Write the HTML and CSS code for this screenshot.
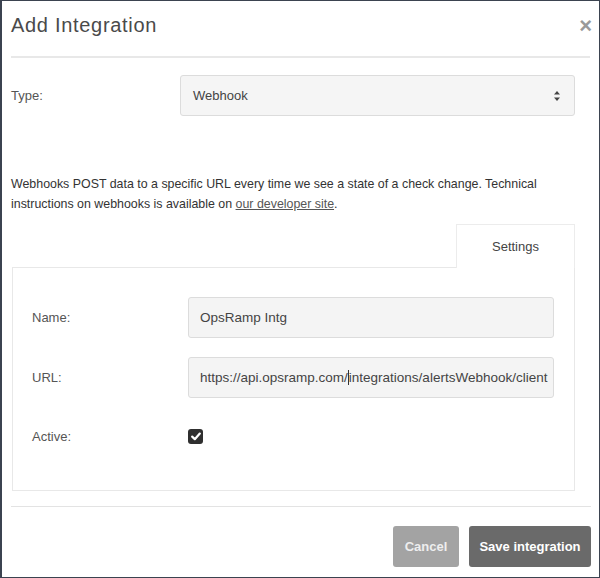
FILE: index.html
```html
<!DOCTYPE html>
<html>
<head>
<meta charset="utf-8">
<link rel="stylesheet" href="styles.css">
</head>
<body>
<div class="modal">
  <div class="modal-header">
    <h1 class="modal-title">Add Integration</h1>
    <span class="close">&times;</span>
  </div>
  <div class="modal-body">
    <div class="type-row">
      <label class="type-label">Type:</label>
      <div class="select">
        <span>Webhook</span>
        <svg class="arrows" width="8" height="12" viewBox="0 0 8 12"><path d="M4 1 L7 4.5 L1 4.5 Z" fill="#444"/><path d="M4 11 L7 7.5 L1 7.5 Z" fill="#444"/></svg>
      </div>
    </div>
    <p class="desc">Webhooks POST data to a specific URL every time we see a state of a check change. Technical instructions on webhooks is available on <a href="#">our developer site</a>.</p>
    <div class="tabs">
      <div class="tab">Settings</div>
    </div>
    <div class="panel">
      <div class="field">
        <label>Name:</label>
        <div class="input">OpsRamp Intg</div>
      </div>
      <div class="field">
        <label>URL:</label>
        <div class="input"><span>https://api.opsramp.com/<span class="caret"></span>integrations/alertsWebhook/client</span></div>
      </div>
      <div class="field check-field">
        <label>Active:</label>
        <span class="checkbox"><svg width="10" height="9" viewBox="0 0 10 9"><path d="M1.2 4.6 L3.8 7.2 L8.8 1.6" stroke="#fff" stroke-width="2.2" fill="none" stroke-linecap="round" stroke-linejoin="round"/></svg></span>
      </div>
    </div>
  </div>
  <div class="modal-footer">
    <button class="btn btn-cancel">Cancel</button>
    <button class="btn btn-save">Save integration</button>
  </div>
</div>
</body>
</html>
```
FILE: styles.css
```css
html, body {
  margin: 0;
  padding: 0;
  background: #fff;
}
body {
  font-family: "Liberation Sans", Arial, sans-serif;
  color: #333;
}
.modal {
  width: 600px;
  height: 578px;
  box-sizing: border-box;
  border: 1px solid #3b4350;
  border-left-width: 2px;
  background: #fff;
  display: flex;
  flex-direction: column;
}
.modal-header {
  margin: 0 9px 0 9px;
  height: 57px;
  border-bottom: 2px solid #e8e8e8;
  display: flex;
  align-items: flex-start;
  justify-content: space-between;
  box-sizing: border-box;
}
.modal-title {
  margin: 12px 0 0 0;
  font-size: 20px;
  font-weight: normal;
  letter-spacing: 0.7px;
  color: #4a4a4a;
  line-height: 24px;
}
.close {
  margin-top: 11px;
  margin-right: -2px;
  font-size: 22px;
  font-weight: bold;
  color: #9a9a9a;
  line-height: 28px;
}
.modal-body {
  padding: 0 24px 0 9px;
}
.type-row {
  display: flex;
  align-items: center;
  margin-top: 17px;
}
.type-label {
  width: 169px;
  font-size: 13px;
  color: #555;
}
.select {
  flex: 1;
  height: 41px;
  box-sizing: border-box;
  background: #f5f5f5;
  border: 1px solid #dcdcdc;
  border-radius: 3px;
  display: flex;
  align-items: center;
  justify-content: space-between;
  padding: 0 13px 0 12px;
  font-size: 13px;
  color: #444;
}
.arrows {
  display: block;
}
.desc {
  margin: 58px 0 0 0;
  font-size: 12.4px;
  line-height: 20px;
  color: #333;
  width: 560px;
}
.desc a {
  color: #555;
  text-decoration: underline;
}
.tabs {
  display: flex;
  justify-content: flex-end;
  margin-top: 10px;
}
.tab {
  width: 119px;
  height: 44px;
  box-sizing: border-box;
  border: 1px solid #ececec;
  border-bottom: none;
  display: flex;
  align-items: center;
  justify-content: center;
  font-size: 13px;
  color: #444;
  margin-bottom: -1px;
  background: #fff;
  position: relative;
}
.panel {
  border: 1px solid #e8e8e8;
  margin-left: 1px;
  height: 224px;
  box-sizing: border-box;
  padding: 29px 20px 0 19px;
}
.field {
  display: flex;
  align-items: center;
  margin-bottom: 19px;
}
.field label {
  width: 156px;
  font-size: 13px;
  color: #555;
}
.input {
  flex: 1;
  height: 41px;
  box-sizing: border-box;
  background: #f4f4f4;
  border: 1px solid #dcdcdc;
  border-radius: 3px;
  display: flex;
  align-items: center;
  padding: 0 11px;
  font-size: 13.5px;
  color: #444;
  white-space: nowrap;
  overflow: hidden;
}
.caret {
  display: inline-block;
  width: 1px;
  height: 15px;
  background: #333;
  vertical-align: -3px;
}
.check-field {
  margin-top: 31px;
}
.checkbox {
  width: 15px;
  height: 15px;
  background: #2f2f2f;
  border-radius: 3px;
  display: flex;
  align-items: center;
  justify-content: center;
}
.modal-footer {
  margin: 15px 8px 0 9px;
  border-top: 1px solid #e3e3e3;
  padding-top: 19px;
  display: flex;
  justify-content: flex-end;
  gap: 10px;
}
.btn {
  height: 41px;
  border: none;
  border-radius: 3px;
  color: #fff;
  font-family: "Liberation Sans", Arial, sans-serif;
  font-size: 13px;
  font-weight: bold;
  padding: 0;
  white-space: nowrap;
}
.btn-cancel {
  background: #a3a3a3;
  width: 66px;
  color: #eee;
}
.btn-save {
  background: #6a6a6a;
  width: 122px;
}
```
